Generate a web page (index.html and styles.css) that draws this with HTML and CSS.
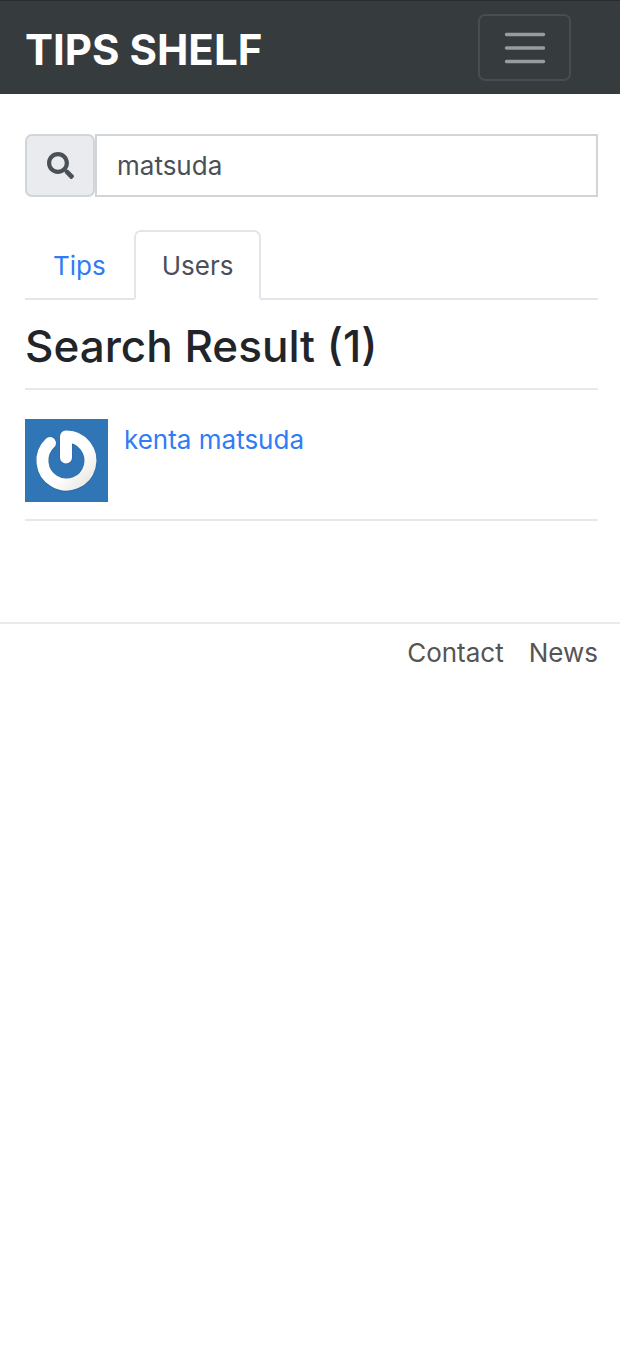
FILE: index.html
```html
<!DOCTYPE html>
<html lang="en">
<head>
<meta charset="utf-8">
<meta name="viewport" content="width=device-width, initial-scale=1">
<title>TIPS SHELF</title>
<link rel="stylesheet" href="styles.css">
</head>
<body>
<header class="navbar">
  <a class="brand" href="#">TIPS SHELF</a>
  <button class="toggler" type="button" aria-label="Toggle navigation">
    <svg class="toggler-icon" viewBox="0 0 50 50" aria-hidden="true"><path d="M6.500 11.500h37M6.500 25h37M6.500 38.500h37"/></svg>
  </button>
</header>
<main class="container">
  <form class="search">
    <label class="search-label" for="q" aria-label="Search">
      <svg class="search-icon" viewBox="0 0 512 512" aria-hidden="true"><path d="M505 442.700L405.300 343c-4.500-4.500-10.600-7-17-7H372c27.600-35.300 44-79.700 44-128C416 93.100 322.900 0 208 0S0 93.100 0 208s93.100 208 208 208c48.300 0 92.700-16.400 128-44v16.300c0 6.400 2.500 12.500 7 17l99.700 99.700c9.400 9.400 24.600 9.400 33.900 0l28.300-28.300c9.400-9.400 9.400-24.600.1-34zM208 336c-70.700 0-128-57.200-128-128 0-70.700 57.200-128 128-128 70.700 0 128 57.200 128 128 0 70.700-57.200 128-128 128z"/></svg>
    </label>
    <input class="search-input" id="q" type="text" value="matsuda">
  </form>
  <nav class="tabs">
    <a class="tab" href="#">Tips</a>
    <a class="tab tab-active" href="#" aria-current="page">Users</a>
  </nav>
  <h1 class="title">Search Result (1)</h1>
  <ul class="results">
    <li class="user">
      <svg class="avatar" viewBox="0 0 83 83" aria-hidden="true">
        <defs>
          <linearGradient id="shade" x1="0" y1="0" x2="1" y2="1">
            <stop offset="0.600" stop-color="#fff"/>
            <stop offset="1" stop-color="#e9e6e1"/>
          </linearGradient>
        </defs>
        <rect width="83" height="83" fill="#3075b5"/>
        <g fill="none" stroke-linecap="round" stroke-linejoin="round">
          <path stroke="#2a69a5" stroke-width="13" d="M25 24.500A24 24 0 1 0 41 18V39"/>
          <path stroke="url(#shade)" stroke-width="12" d="M25 24A24 24 0 1 0 41 17.500V38.500"/>
        </g>
      </svg>
      <a class="user-name" href="#">kenta matsuda</a>
    </li>
  </ul>
</main>
<footer class="footer">
  <a class="footer-link" href="#">Contact</a>
  <a class="footer-link" href="#">News</a>
</footer>
</body>
</html>
```
FILE: styles.css
```css
* { box-sizing: border-box; }
body {
  margin: 0;
  background: #fff;
  color: #212529;
  font-family: Inter, "Liberation Sans", sans-serif;
  font-size: 26px;
  line-height: 40px;
}
a { color: #2f7cf6; text-decoration: none; }
.navbar {
  display: flex;
  align-items: center;
  justify-content: space-between;
  padding: 13px 49px 13px 25px;
  background: #363b3e;
  border-top: 1px solid #292b2e;
}
.brand {
  padding-top: 4px;
  color: #fff;
  font-size: 42px;
  font-weight: 700;
}
.toggler {
  display: flex;
  align-items: center;
  justify-content: center;
  width: 93px;
  height: 67px;
  padding: 0;
  background: none;
  border: 2px solid #494c50;
  border-radius: 7px;
}
.toggler-icon {
  width: 50px;
  height: 50px;
  fill: none;
  stroke: #989c9f;
  stroke-width: 3.500;
  stroke-linecap: round;
}
.container { padding: 40px 22px 0 25px; }
.search { display: flex; height: 63px; }
.search-label {
  display: flex;
  align-items: center;
  justify-content: center;
  width: 70px;
  background: #e9ebef;
  border: 2px solid #d0d5da;
  border-radius: 7px;
}
.search-icon { width: 27px; height: 27px; fill: #4b5056; }
.search-input {
  flex: 1;
  min-width: 0;
  padding: 0 20px;
  background: #fff;
  border: 2px solid #d0d5da;
  border-radius: 0;
  color: #4b5056;
  font: inherit;
}
.tabs {
  display: flex;
  margin-top: 33px;
  border-bottom: 2px solid #e2e5e9;
}
.tab {
  margin-bottom: -2px;
  padding: 14px 26px 12px;
  border: 2px solid transparent;
  border-radius: 7px 7px 0 0;
}
.tab-active {
  color: #4b5056;
  background: #fff;
  border-color: #e2e5e9 #e2e5e9 #fff;
}
.title {
  margin: 20px 0 0;
  padding-bottom: 16px;
  border-bottom: 2px solid #e8e8e8;
  font-size: 44px;
  font-weight: 500;
  line-height: 52px;
}
.results { margin: 0; padding: 0; list-style: none; }
.user {
  display: flex;
  gap: 16px;
  padding: 29px 0 17px;
  border-bottom: 2px solid #e8e8e8;
}
.avatar { width: 83px; height: 83px; }
.user-name { line-height: 42px; }
.footer {
  display: flex;
  justify-content: flex-end;
  gap: 25px;
  margin-top: 101px;
  padding: 9px 22px;
  border-top: 2px solid #ebebeb;
}
.footer-link { color: #555; }
```
